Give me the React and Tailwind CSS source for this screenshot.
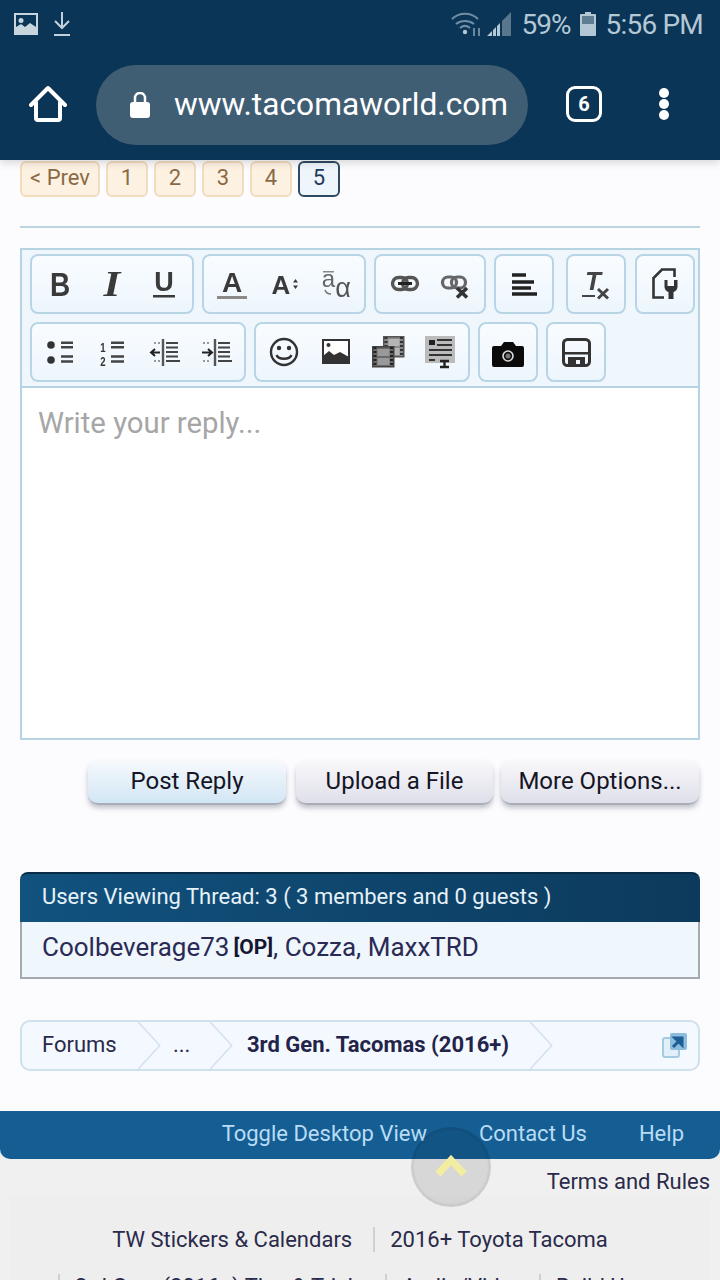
import React from "react";

const Page = ({ children, active, wide }) => (
  <div
    className={`h-[36px] flex items-center justify-center rounded-[6px] border-2 pb-[3px] text-[22px] ${wide ? "w-[80px]" : "w-[42px]"} ${
      active
        ? "border-[#2f4a63] bg-[#eef6fc] text-[#1d3a5a]"
        : "border-[#f2dcbc] bg-[#fdf2e2] text-[#8a6a45]"
    }`}
  >
    {children}
  </div>
);

const Ico = ({ children }) => (
  <svg viewBox="0 0 40 40" className="w-[40px] h-[40px] blur-[0.4px]" fill="none">
    {children}
  </svg>
);

const G = "#3a3a3a";
const T = ({ x = 20, y = 29, s = 30, w = 700, st = "normal", f = "Liberation Sans", c = G, sx = 1, children }) => (
  <text
    transform={`translate(${x} ${y}) scale(${sx} 1)`}
    fontSize={s}
    fontWeight={w}
    fontStyle={st}
    fontFamily={f}
    fill={c}
    textAnchor="middle"
  >
    {children}
  </text>
);

const outdentLines = "M22 11h12M22 15.500h12M22 20h12M22 24.500h12M22 29h14";

const icons = {
  b: <Ico><T y={32} s={33} sx={0.85}>B</T></Ico>,
  i: <Ico><T y={32} s={36} st="italic" f="Liberation Serif" sx={1.2}>I</T></Ico>,
  u: (
    <Ico>
      <T y={27} s={27}>U</T>
      <rect x="9" y="31" width="22" height="2.500" fill={G} />
    </Ico>
  ),
  color: (
    <Ico>
      <T y={28} s={28}>A</T>
      <rect x="5" y="32" width="30" height="3" fill="#8a8a8a" />
    </Ico>
  ),
  size: (
    <Ico>
      <T x={17} y={30} s={26}>A</T>
      <path d="M31.500 15l2.500 3.500h-5zM31.500 25l2.500-3.500h-5z" fill={G} />
    </Ico>
  ),
  fam: (
    <Ico>
      <T x={12.500} y={23} s={24} w={400} c="#666">a</T>
      <rect x="7" y="7" width="11" height="1.500" fill="#888" />
      <T x={27} y={33} s={27} w={400} c="#555">α</T>
      <path d="M9 26c1 3 3 4 6 4" stroke="#777" strokeWidth="1.500" />
    </Ico>
  ),
  link: (
    <Ico>
      <g stroke="#555" strokeWidth="3.400">
        <rect x="8.500" y="13.500" width="15" height="12" rx="6" />
        <rect x="18.500" y="13.500" width="15" height="12" rx="6" />
      </g>
      <path d="M14 19.500h14" stroke="#222" strokeWidth="3" />
    </Ico>
  ),
  unlink: (
    <Ico>
      <g stroke="#666" strokeWidth="3.200">
        <rect x="6.500" y="13" width="14" height="11" rx="5.500" />
        <rect x="15.500" y="13" width="14" height="11" rx="5.500" />
      </g>
      <path d="M21 24l10 9.500M31 24l-10 9.500" stroke="#333" strokeWidth="3.600" />
    </Ico>
  ),
  align: (
    <Ico>
      <path d="M8 11h14M8 18h22M8 24h19M8 30h25" stroke="#222" strokeWidth="3.400" />
    </Ico>
  ),
  clear: (
    <Ico>
      <T x={17} y={26} s={26} st="italic" c="#444">T</T>
      <rect x="6" y="31" width="13" height="2" fill="#444" />
      <path d="M22 25l10 9.500M32 25l-10 9.500" stroke="#444" strokeWidth="3" />
    </Ico>
  ),
  file: (
    <Ico>
      <path d="M19 33.500H8.500V14L17 5.500h12.500V13" stroke="#333" strokeWidth="2.600" />
      <path
        d="M19.500 16h3v6h6.500v-6h3.500v7a6 6 0 0 1-4 5v7h-5v-7a6 6 0 0 1-4-5z"
        fill="#333"
      />
    </Ico>
  ),
  bullet: (
    <Ico>
      <circle cx="11" cy="13" r="3.800" fill="#333" />
      <circle cx="11" cy="28" r="3.800" fill="#333" />
      <path d="M21 10.700h12M21 15.300h12M21 24.500h12M21 29.500h12" stroke="#444" strokeWidth="2.400" />
    </Ico>
  ),
  num: (
    <Ico>
      <T x={11} y={20} s={12} c="#333" sx={0.8}>1</T>
      <T x={11} y={34} s={12} c="#333" sx={0.8}>2</T>
      <path d="M19 10.700h13M19 15.300h13M19 24.500h13M19 29.500h13" stroke="#444" strokeWidth="2.400" />
    </Ico>
  ),
  out: (
    <Ico>
      <path d="M19 7v27" stroke="#555" strokeWidth="2.400" />
      <path d={outdentLines} stroke="#444" strokeWidth="2.200" />
      <path d="M16 20.500H7m4-3.500l-4 3.500 4 3.500" stroke="#222" strokeWidth="2" />
      <path d="M10 11h6M10 29h6" stroke="#999" strokeWidth="2" strokeDasharray="2 2" />
    </Ico>
  ),
  ind: (
    <Ico>
      <path d="M19 7v27" stroke="#555" strokeWidth="2.400" />
      <path d={outdentLines} stroke="#444" strokeWidth="2.200" />
      <path d="M6 20.500h10m-4-3.500l4 3.500-4 3.500" stroke="#222" strokeWidth="2" />
      <path d="M7 11h6M7 29h6" stroke="#999" strokeWidth="2" strokeDasharray="2 2" />
    </Ico>
  ),
  smile: (
    <Ico>
      <circle cx="20" cy="20" r="13" stroke="#333" strokeWidth="2.400" />
      <circle cx="15" cy="16" r="2.200" fill="#333" />
      <circle cx="25" cy="16" r="2.200" fill="#333" />
      <path d="M12.500 23c2 5 13 5 15 0" stroke="#333" strokeWidth="2.400" />
    </Ico>
  ),
  image: (
    <Ico>
      <rect x="7" y="8" width="26" height="23" fill="#fff" stroke="#333" strokeWidth="2" />
      <circle cx="12.500" cy="13" r="2" fill="#333" />
      <path d="M7 31v-7l6-5 5 4 6-3 9 5v6z" fill="#333" />
    </Ico>
  ),
  film: (
    <Ico>
      <rect x="15.750" y="4.750" width="20" height="20" fill="#8a8a8a" stroke="#555" strokeWidth="1.500" />
      <path d="M18 5v20M33.500 5v20" stroke="#333" strokeWidth="3" strokeDasharray="2 2" />
      <rect x="20.500" y="7" width="11" height="7" fill="#b5b5b5" />
      <rect x="20.500" y="16" width="11" height="7" fill="#b5b5b5" />
      <rect x="4.750" y="14.750" width="21" height="20" fill="#6a6a6a" stroke="#444" strokeWidth="1.500" />
      <path d="M7 15v20M23.500 15v20" stroke="#222" strokeWidth="3" strokeDasharray="2 2" />
      <rect x="9.500" y="17" width="12" height="7" fill="#999" />
      <rect x="9.500" y="26" width="12" height="7" fill="#999" />
    </Ico>
  ),
  tmpl: (
    <Ico>
      <rect x="5" y="4" width="30" height="27" fill="#bbb" />
      <rect x="9" y="8" width="6" height="5" fill="#222" />
      <path d="M17 8h15M17 13h15M9 18h23M9 23h23M9 28h6" stroke="#333" strokeWidth="2" />
      <path d="M20 29h9M24.500 29v6M20 35h9" stroke="#222" strokeWidth="2.400" />
    </Ico>
  ),
  cam: (
    <Ico>
      <path
        d="M6 14h7l3-4h9l3 4h6a2 2 0 0 1 2 2v17a2 2 0 0 1-2 2H6a2 2 0 0 1-2-2V16a2 2 0 0 1 2-2z"
        fill="#0b0b0b"
      />
      <circle cx="20" cy="24" r="5" fill="#111" stroke="#ddd" strokeWidth="1.600" />
      <circle cx="20" cy="24" r="2.500" fill="#777" />
    </Ico>
  ),
  save: (
    <Ico>
      <rect x="7.500" y="7.500" width="26" height="26" rx="4" stroke="#333" strokeWidth="3" />
      <rect x="8" y="20" width="25" height="2.500" fill="#333" />
      <path d="M12 33v-8h17v8h-5v-5h-4v5z" fill="#333" />
    </Ico>
  ),
};

const Group = ({ items, className = "" }) => (
  <div
    className={`flex h-[60px] px-[2px] items-center rounded-[8px] border-2 border-[#b8d5e5] bg-gradient-to-b from-[#f9fcff] to-[#edf6fd] ${className}`}
  >
    {items.map((k) => (
      <div key={k} className="w-[52px] flex justify-center">
        {icons[k]}
      </div>
    ))}
  </div>
);

const Btn = ({ children, blue, className = "w-[198px]" }) => (
  <div
    className={`h-[44px] flex items-center justify-center rounded-[10px] pb-[2px] text-[24px] text-[#151525] border-b-2 border-[#a8adb8] shadow-[0_3px_5px_rgba(80,80,100,0.35)] bg-gradient-to-b ${className} ${
      blue ? "from-[#f6f9fc] to-[#d2e6f5]" : "from-[#f8f8fa] to-[#dfdfea]"
    }`}
  >
    {children}
  </div>
);

const Chevron = () => (
  <svg
    viewBox="0 0 24 48"
    className="absolute right-0 top-0 w-[24px] h-[47px]"
    fill="none"
    stroke="#d2e2ec"
    strokeWidth="1.500"
  >
    <path d="M1 0l22 24L1 48" />
  </svg>
);

const Sep = () => <span className="w-[2px] h-[25px] bg-[#d0d0d0]" />;

export default function App() {
  return (
    <div
      className="relative w-[720px] h-[1280px] overflow-hidden bg-[#fcfcff]"
      style={{ fontFamily: "Roboto, sans-serif" }}
    >
      {/* browser chrome */}
      <header className="relative z-10 h-[160px] bg-[#0a3556] shadow-[0_3px_8px_rgba(0,0,0,0.15)]">
        <div className="h-[48px] flex items-center justify-between pl-[14px] pr-[17px] text-[#b4c7d5]">
          <div className="flex items-center gap-[15px]">
            <svg viewBox="0 0 24 22" className="w-[24px] h-[22px]">
              <path d="M0 0h24v22H0z" fill="#c8d5de" />
              <path d="M2 2h20v18H2z" fill="#0a3556" />
              <circle cx="7" cy="7.500" r="2.500" fill="#c8d5de" />
              <path d="M2 20v-6l5-3 4 3 5-4 6 4v6z" fill="#c8d5de" />
            </svg>
            <svg viewBox="0 0 18 24" className="w-[18px] h-[24px]" fill="none" stroke="#c0d0dc" strokeWidth="2">
              <path d="M9 0v16M2 9l7 7 7-7M1 23h16" />
            </svg>
          </div>
          <div className="flex items-center">
            <svg viewBox="0 0 32 24" className="w-[32px] h-[24px]" fill="none" stroke="#6f8da3" strokeWidth="2.200">
              <path d="M1 7c7-7 19-7 26 0M5 12c5-4 13-4 18 0M9 16c3-2.500 7-2.500 10 0" />
              <circle cx="14" cy="20" r="2.200" fill="#b4c7d5" stroke="none" />
              <path d="M23 16v8M28 16v8" stroke="#8aa4b6" strokeWidth="1.500" />
            </svg>
            <svg viewBox="0 0 24 24" className="w-[24px] h-[24px] ml-[4px]">
              <path d="M0 24l5-5v5zM6 18l3-3v9H6zM10 14l3-3v13h-3z" fill="#b4c7d5" />
              <path d="M15 9l9-9v24h-9z" fill="#58768c" />
            </svg>
            <span className="text-[28px] ml-[11px] mt-[2px] leading-none tracking-[-1px]">59%</span>
            <svg viewBox="0 0 16 24" className="w-[16px] h-[24px] ml-[9px]">
              <path d="M5 0h6v2h4a1 1 0 0 1 1 1v20a1 1 0 0 1-1 1H1a1 1 0 0 1-1-1V3a1 1 0 0 1 1-1h4z" fill="#b4c7d5" />
              <rect x="2" y="4" width="12" height="8" fill="#5f7d93" />
            </svg>
            <span className="text-[28px] ml-[10px] mt-[2px] leading-none tracking-[-0.8px]">5:56 PM</span>
          </div>
        </div>
        <div className="h-[112px] flex items-center">
          <div className="w-[96px] flex justify-center">
            <svg viewBox="0 0 38 38" className="w-[38px] h-[38px]" fill="none" stroke="#fff" strokeWidth="4" strokeLinejoin="round" strokeLinecap="round">
              <path d="M2 20L19 3l17 17M7 17v16a2 2 0 0 0 2 2h20a2 2 0 0 0 2-2V17" />
            </svg>
          </div>
          <div className="w-[432px] h-[80px] mb-[-1px] rounded-full bg-[#3f5e74] flex items-center pl-[34px]">
            <svg viewBox="0 0 20 26" className="w-[20px] h-[26px] mr-[24px]">
              <path d="M5 11V6a5 5 0 0 1 10 0v5" fill="none" stroke="#fff" strokeWidth="2.500" />
              <rect x="0" y="10" width="20" height="16" rx="3" fill="#fff" />
            </svg>
            <span className="text-[31.700px] leading-none text-white">www.tacomaworld.com</span>
          </div>
          <div className="ml-[38px] w-[36px] h-[36px] rounded-[9px] border-[3.500px] border-white flex items-center justify-center text-white font-bold text-[20px]">
            6
          </div>
          <div className="ml-[57px] flex flex-col gap-px">
            <span className="w-[10px] h-[10px] rounded-full bg-white" />
            <span className="w-[10px] h-[10px] rounded-full bg-white" />
            <span className="w-[10px] h-[10px] rounded-full bg-white" />
          </div>
        </div>
      </header>

      <main className="px-[20px]">
        <div className="flex gap-[6px] pt-px">
          <Page wide>&lt; Prev</Page>
          <Page>1</Page>
          <Page>2</Page>
          <Page>3</Page>
          <Page>4</Page>
          <Page active>5</Page>
        </div>

        <div className="mt-[29px] h-[2px] bg-[#bcd6e0]" />

        <section className="mt-[20px] h-[492px] border-2 border-[#b5d3e0] flex flex-col">
          <div className="h-[138px] shrink-0 bg-[#eff7fd] border-b-2 border-[#b5d3e0] pl-[8px] pt-[4px] flex flex-col gap-[8px]">
            <div className="flex gap-[8px]">
              <Group items={["b", "i", "u"]} />
              <Group items={["color", "size", "fam"]} />
              <Group items={["link", "unlink"]} />
              <Group items={["align"]} />
              <Group items={["clear"]} className="ml-[4px]" />
              <Group items={["file"]} className="ml-px" />
            </div>
            <div className="flex gap-[8px]">
              <Group items={["bullet", "num", "out", "ind"]} />
              <Group items={["smile", "image", "film", "tmpl"]} />
              <Group items={["cam"]} />
              <Group items={["save"]} />
            </div>
          </div>
          <div className="flex-1 bg-white pl-[16px] pt-[18px] text-[29.300px] leading-[34px] text-[#a6a6a6]">
            Write your reply...
          </div>
        </section>

        <div className="mt-[21px] flex justify-end gap-[8px] pr-px">
          <Btn blue className="w-[198px] mr-[2px]">Post Reply</Btn>
          <Btn className="w-[197px]">Upload a File</Btn>
          <Btn>More Options...</Btn>
        </div>

        <section className="mt-[67px]">
          <div className="h-[50px] flex items-center pl-[22px] pb-[4px] text-[22px] text-[#e6f1f8] rounded-t-[8px] border-t-2 border-[#082c48] bg-gradient-to-r from-[#11527f] to-[#0c3a5c]">
            Users Viewing Thread: 3 ( 3 members and 0 guests )
          </div>
          <div className="h-[57px] flex items-center pl-[20px] pb-[4px] text-[26px] text-[#2a2a55] bg-[#eff6fc] border-2 border-t-0 border-[#a3abb0]">
            <span>Coolbeverage73</span>
            <span className="ml-[4px] text-[21px] font-bold text-[#16162e]">[OP]</span>
            <span>, Cozza, MaxxTRD</span>
          </div>
        </section>

        <nav className="mt-[41px] h-[51px] rounded-[10px] border-2 border-[#cfe1ec] bg-[#f3f9fe] flex items-center justify-between text-[22px] text-[#2a2a4a]">
          <div className="flex items-center h-full">
            <div className="relative w-[139px] h-full flex items-center pl-[20px] pb-[3px]">
              Forums
              <Chevron />
            </div>
            <div className="relative w-[72px] h-full flex items-center pl-[12px] pb-[3px]">
              ...
              <Chevron />
            </div>
            <div className="relative w-[320px] h-full flex items-center pl-[14px] pb-[3px] font-bold text-[#24244a]">
              3rd Gen. Tacomas (2016+)
              <Chevron />
            </div>
          </div>
          <svg viewBox="0 0 26 26" className="w-[26px] h-[26px] mr-[10px] mb-[1px]">
            <rect x="1" y="6" width="16" height="19" rx="2" fill="#e2eff8" stroke="#a5cbe4" strokeWidth="2" />
            <rect x="8" y="1" width="17" height="17" rx="2" fill="#8dbcdc" />
            <path d="M11 15l7-7M13 6h7v7z" stroke="#1d5f94" strokeWidth="3" fill="#1d5f94" />
          </svg>
        </nav>
      </main>

      <footer className="mt-[40px] bg-[#f0f0f0]">
        <div className="h-[48px] rounded-b-[10px] bg-[#155e94] flex items-center justify-end gap-[52px] pr-[36px] pb-[4px] text-[22px] text-[#b9dcf4]">
          <span>Toggle Desktop View</span>
          <span>Contact Us</span>
          <span>Help</span>
        </div>
        <div className="mt-[7px] h-[30px] flex items-center justify-end pr-[10px] text-[22px] text-[#2a2a4a]">
          Terms and Rules
        </div>
        <div className="mx-[10px] bg-[#eeeeee] pt-[25px] text-[22px] text-[#2a2a4a]">
          <div className="h-[36px] flex items-center justify-center gap-[15px]">
            <span className="pr-[6px]">TW Stickers &amp; Calendars</span>
            <Sep />
            <span>2016+ Toyota Tacoma</span>
          </div>
          <div className="mt-[11px] h-[36px] flex items-center pl-[48px] gap-[15px]">
            <Sep />
            <span>3rd Gen. (2016+) Tips &amp; Tricks</span>
            <Sep />
            <span>Audio/Video</span>
            <Sep />
            <span>Build Up</span>
          </div>
        </div>
      </footer>

      {/* scroll-to-top floating button */}
      <div className="absolute left-[411px] top-[1127px] w-[80px] h-[80px] rounded-full border-[3px] border-black/5 bg-black/10 flex items-start justify-center pt-[25px]">
        <svg viewBox="0 0 32 22" className="w-[32px] h-[22px]" fill="none" stroke="#f2eda0" strokeWidth="7">
          <path d="M3 19L16 5l13 14" />
        </svg>
      </div>
    </div>
  );
}
